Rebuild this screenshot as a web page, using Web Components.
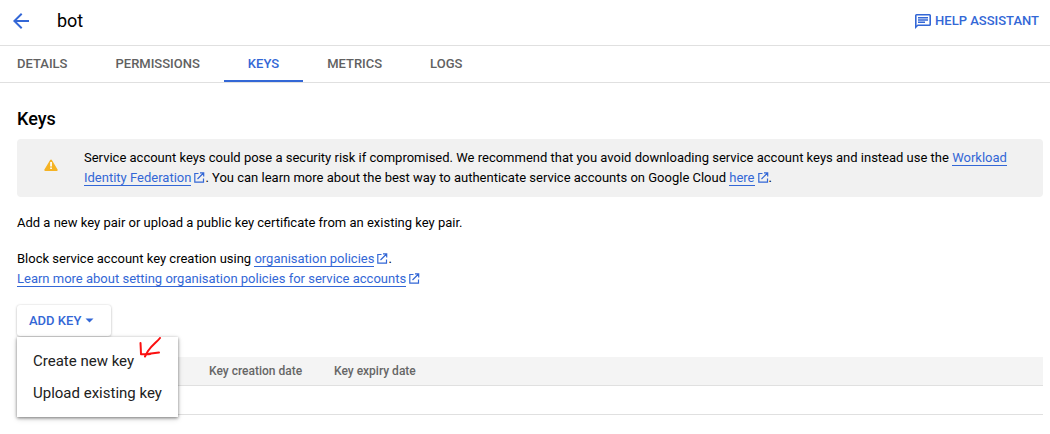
<!DOCTYPE html>
<html lang="en-GB">
<head>
<meta charset="utf-8">
<title>bot – Keys</title>
<style>
  :root { --blue: #3367d6; --line: #e0e0e0; --muted: #616161; }
  body { margin: 0; background: #fff; color: #000; font: 13px/20px Roboto, "Liberation Sans", sans-serif; }
</style>
</head>
<body>
<service-account-page></service-account-page>

<script>
const define = (name, html) => {
  const template = document.createElement('template');
  template.innerHTML = html;
  customElements.define(name, class extends HTMLElement {
    connectedCallback() {
      if (this.shadowRoot) return;
      this.attachShadow({ mode: 'open' }).append(template.content.cloneNode(true));
    }
  });
};

define('page-header', `
<style>
  :host { display: flex; align-items: center; height: 45px; padding: 0 11px; border-bottom: 1px solid var(--line); }
  .bar { display: flex; flex: 1; align-items: center; height: 40px; margin-bottom: 4px; }
  button { display: flex; align-items: center; gap: 4px; padding: 0; border: 0; background: none; color: var(--blue); font: 500 13px/20px Roboto, sans-serif; }
  h1 { flex: 1; margin: 0 0 0 26px; font-size: 18px; line-height: 24px; font-weight: 400; }
  svg { display: block; fill: currentColor; }
</style>
<div class="bar">
  <button type="button" aria-label="Back"><svg width="20" height="20" viewBox="0 0 20 20"><path d="M18 9H5.8l5.6-5.6L10 2l-8 8 8 8 1.400-1.400L5.800 11H18z"/></svg></button>
  <h1><slot></slot></h1>
  <button type="button"><svg width="16" height="16" viewBox="0 0 16 16"><path fill-rule="evenodd" d="M1.500 1h13A1.500 1.500 0 0 1 16 2.500v9a1.500 1.500 0 0 1-1.500 1.500H3L0 16V2.500A1.500 1.500 0 0 1 1.500 1zM1.600 2.600v9.800l1-1h11.800V2.600zM3 4h10v1.500H3zm0 2.200h10v1.500H3zm0 2.200h7v1.500H3z"/></svg>HELP ASSISTANT</button>
</div>`);

define('tab-link', `
<style>
  :host { display: block; }
  a { display: block; padding: 8px 24px; height: 18px; line-height: 20px; font-weight: 500; color: var(--muted); text-decoration: none; border-bottom: 2px solid transparent; }
  :host([first]) a { padding-left: 17px; }
  :host([selected]) a { color: var(--blue); border-color: var(--blue); }
</style>
<a href="#"><slot></slot></a>`);

define('tab-strip', `
<style>:host { display: flex; border-bottom: 1px solid var(--line); }</style>
<slot></slot>`);

define('external-link', `
<style>
  :host { display: inline; }
  a { color: var(--blue); text-decoration: none; border-bottom: 1px solid var(--blue); }
  svg { margin-left: 3px; vertical-align: -1px; fill: none; stroke: var(--blue); stroke-width: 1.2; }
</style>
<a href="#"><slot></slot></a><svg width="11" height="11" viewBox="0 0 11 11"><path d="M4.500 1.500H.800v8.700h8.700V6.500M6 .800h3.700v3.700M9.500 1l-6 6"/></svg>`);

define('warning-banner', `
<style>
  :host { display: flex; align-items: center; padding: 9px 33px 9px 27px; border-radius: 4px; background: #f1f1f1; }
  svg { flex: none; margin-right: 26px; }
  p { flex: 1; margin: 0; }
</style>
<svg width="14" height="18" viewBox="0 0 14 18"><path fill="#f5b324" stroke="#f5b324" stroke-width="2" stroke-linejoin="round" d="M7 1.500 1.300 11h11.400z"/><path fill="#fff" d="M6.200 3h1.700v4.500H6.200zm0 5.500h1.700V10H6.200z"/></svg>
<p><slot></slot></p>`);

define('add-key-menu', `
<style>
  :host { display: block; position: relative; width: max-content; }
  .toggle { display: flex; align-items: center; gap: 4px; height: 31px; padding: 0 17px 0 12px; border: 0; border-radius: 3px; background: #fff; color: var(--blue); font: 500 13px/20px Roboto, sans-serif; box-shadow: 0 0 2px #0002, 0 1px 3px #0003; }
  .toggle svg { fill: currentColor; }
  [role=menu] { position: absolute; top: 100%; left: 0; margin-top: 1px; padding: 8px 0; background: #fff; box-shadow: 0 1px 3px #0007, 0 2px 6px #0002; z-index: 1; }
  [role=menuitem] { display: block; width: 100%; height: 32px; padding: 0 16px; border: 0; background: none; text-align: left; white-space: nowrap; color: #212121; font: 400 15px/32px Roboto, sans-serif; }
  .mark { position: absolute; left: 122px; top: 0; fill: none; stroke: #fb1010; stroke-width: 2; stroke-linecap: round; stroke-linejoin: round; }
</style>
<button class="toggle" type="button" aria-haspopup="menu" aria-expanded="true">ADD KEY<svg width="9" height="5" viewBox="0 0 9 5"><path d="M.500.500h8l-4 4z"/></svg></button>
<div role="menu">
  <button type="button" role="menuitem">Create new key</button>
  <button type="button" role="menuitem">Upload existing key</button>
  <svg class="mark" width="24" height="22" viewBox="0 0 24 22"><path d="M21 1C18 5 13 8 9 14l-3 5.500M1.500 6l.300 6 .200 5.200q8 .300 10-.700l8-1"/></svg>
</div>`);

define('keys-table', `
<style>
  :host { display: block; }
  table { width: 100%; border-collapse: collapse; table-layout: fixed; }
  th, td { height: 28px; padding: 0 16px; border-bottom: 1px solid var(--line); }
  th { background: #f4f4f4; color: #666; font-size: 12px; line-height: 20px; font-weight: 500; text-align: left; white-space: nowrap; }
  .key { width: 176px; }
  .date { width: 125px; }
</style>
<table>
  <colgroup><col class="key"><col class="date"><col></colgroup>
  <thead><tr><th></th><th scope="col">Key creation date</th><th scope="col">Key expiry date</th></tr></thead>
  <tbody><tr><td></td><td></td><td></td></tr></tbody>
</table>`);

define('service-account-page', `
<style>
  :host { display: block; }
  main { padding: 24px 7px 16px 17px; }
  h2 { margin: 0 0 8px; font-size: 18px; line-height: 24px; font-weight: 500; }
  p { margin: 16px 0; }
  add-key-menu { margin-bottom: 21px; }
</style>
<page-header>bot</page-header>
<tab-strip>
  <tab-link first>DETAILS</tab-link><tab-link>PERMISSIONS</tab-link><tab-link selected>KEYS</tab-link><tab-link>METRICS</tab-link><tab-link>LOGS</tab-link>
</tab-strip>
<main>
  <h2>Keys</h2>
  <warning-banner>Service account keys could pose a security risk if compromised. We recommend that you avoid downloading service account keys and instead use the <external-link>Workload Identity Federation</external-link>. You can learn more about the best way to authenticate service accounts on Google Cloud <external-link>here</external-link>.</warning-banner>
  <p>Add a new key pair or upload a public key certificate from an existing key pair.</p>
  <p>Block service account key creation using <external-link>organisation policies</external-link>.<br><external-link>Learn more about setting organisation policies for service accounts</external-link></p>
  <add-key-menu></add-key-menu>
  <keys-table></keys-table>
</main>`);
</script>
</body>
</html>
